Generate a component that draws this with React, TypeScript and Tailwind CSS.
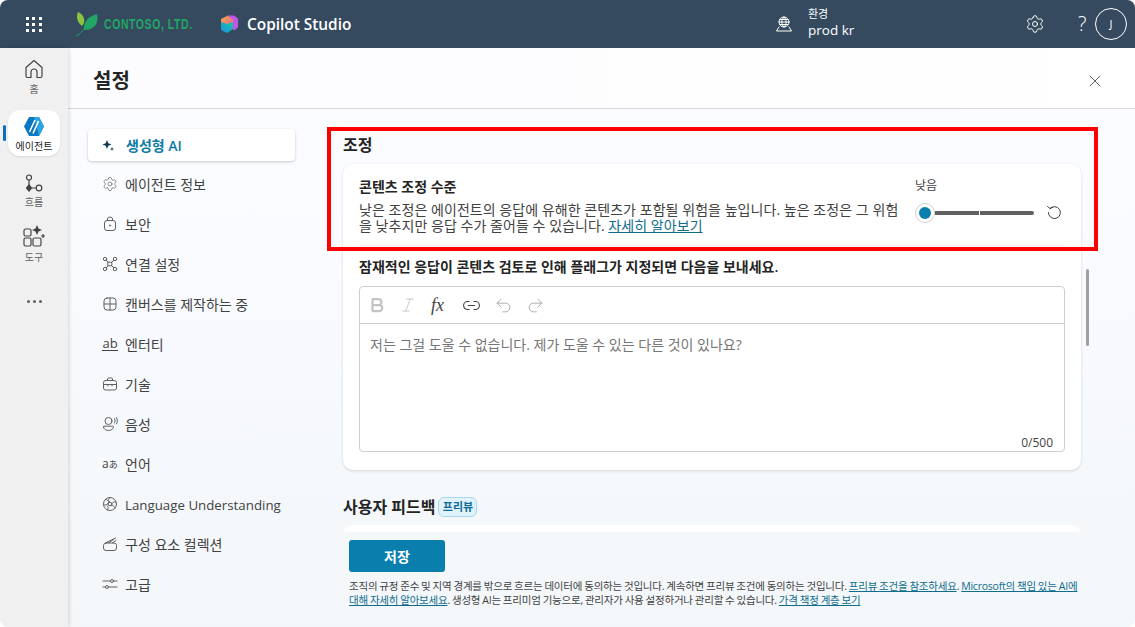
import { Bold, Italic, Link2, Redo2, Settings, Undo2, X } from 'lucide-react';
import type { ReactNode } from 'react';

const stroke = {
  fill: 'none',
  stroke: 'currentColor',
  strokeWidth: 1,
  strokeLinecap: 'round' as const,
  strokeLinejoin: 'round' as const,
};

function Icon({ children, size = 16 }: { children: ReactNode; size?: number }) {
  return (
    <svg width={size} height={size} viewBox="0 0 16 16" {...stroke}>
      {children}
    </svg>
  );
}

const navItems: { label: string; icon: ReactNode }[] = [
  {
    label: '에이전트 정보',
    icon: <Settings size={16} strokeWidth={1} />,
  },
  {
    label: '보안',
    icon: (
      <Icon>
        <rect x="2.5" y="4.5" width="11" height="10" rx="2.5" />
        <path d="M5.5 4.5V3a2.5 2 0 0 1 5 0v1.5" />
        <circle cx="8" cy="9.5" r=".6" fill="currentColor" />
      </Icon>
    ),
  },
  {
    label: '연결 설정',
    icon: (
      <Icon>
        <circle cx="3" cy="3" r="1.7" />
        <circle cx="13" cy="3" r="1.7" />
        <circle cx="3" cy="13" r="1.7" />
        <circle cx="13" cy="13" r="1.7" />
        <rect x="6.2" y="6.2" width="3.6" height="3.6" />
        <path d="M4.2 4.2l2 2M11.8 4.2l-2 2M4.2 11.8l2-2M11.8 11.8l-2-2" />
      </Icon>
    ),
  },
  {
    label: '캔버스를 제작하는 중',
    icon: (
      <Icon>
        <rect x="2" y="2" width="12" height="12" rx="3" />
        <path d="M8 2v12M2 8h12" />
      </Icon>
    ),
  },
  {
    label: '엔터티',
    icon: (
      <span className="flex w-[16px] flex-col items-center text-[13px] leading-[12px] text-[#424242]">
        ab
        <span className="mt-[1px] h-px w-[16px] bg-[#424242]" />
      </span>
    ),
  },
  {
    label: '기술',
    icon: (
      <Icon>
        <rect x="1.5" y="4.5" width="13" height="9.500" rx="2" />
        <path d="M5.500 4.500V3a1 1 0 0 1 1-1h3a1 1 0 0 1 1 1v1.500M1.500 8.500h13M6 8.500v1.500M10 8.500v1.500" />
      </Icon>
    ),
  },
  {
    label: '음성',
    icon: (
      <Icon>
        <circle cx="6.500" cy="5" r="3.500" />
        <path d="M1.500 11c0-.5.500-.8 1-.8h8c.5 0 1 .3 1 .8 0 2-2.500 3.500-5 3.500s-5-1.500-5-3.500zM12.500 2.500c.8 1.200.8 3.500 0 4.500M14.500 1.500c1.200 1.800 1.200 5 0 6.500" />
      </Icon>
    ),
  },
  {
    label: '언어',
    icon: (
      <span className="flex w-[16px] items-baseline text-[12px] leading-none text-[#424242]">
        a<span className="text-[9px]">あ</span>
      </span>
    ),
  },
  {
    label: 'Language Understanding',
    icon: (
      <Icon>
        <circle cx="8" cy="8" r="6.500" />
        <circle cx="8" cy="8" r="1.800" />
        <path d="M8 1.500c-2 2-2 3.500 0 4.700M14 6c-2.500-.5-4 .5-4.300 2.500M13 12c-1-2.500-2.500-3-4-2.300M5.500 14c1-2 1-3.500-.5-4.500M1.800 9c2.500.2 4-.5 4.500-2M3.500 3.500c1.800 0 3 1 3.500 3" />
      </Icon>
    ),
  },
  {
    label: '구성 요소 컬렉션',
    icon: (
      <Icon>
        <rect x="1.500" y="7" width="13" height="7.500" rx="2.500" />
        <path d="M3.500 7l8-4M6.500 7l7-5M10.500 7l3.500-2.500" />
      </Icon>
    ),
  },
  {
    label: '고급',
    icon: (
      <Icon>
        <path d="M1 5h7.500M11.500 5H15M1 11h2.500M6.500 11H15" />
        <circle cx="10" cy="5" r="1.500" />
        <circle cx="5" cy="11" r="1.500" />
      </Icon>
    ),
  },
];

function WaffleIcon() {
  return (
    <div className="grid w-[16px] grid-cols-3 gap-[3px]">
      {[0, 1, 2, 3, 4, 5, 6, 7, 8].map((i) => (
        <span key={i} className="h-[3px] w-[3px] bg-white" />
      ))}
    </div>
  );
}

function TopBar() {
  return (
    <header className="flex h-[48px] shrink-0 items-center bg-[#354a5f] text-white">
      <div className="ml-[26px] mr-[34px]">
        <WaffleIcon />
      </div>
      <svg width="24" height="26" viewBox="0 0 24 26">
        <path d="M6 15C1 11 0 6 2 1c4 2 7 5 6 11z" fill="#8cc63f" />
        <path d="M8 19c-1-7 3-13 13-16 2 9-2 16-13 16z" fill="#22a565" />
        <path d="M0 25c4-2 8-6 12-13" fill="none" stroke="#22a565" strokeWidth="1" />
      </svg>
      <span className="ml-[4px] w-[90px] origin-left scale-x-[0.68] whitespace-nowrap font-['Liberation_Sans'] text-[15.500px] font-bold tracking-[0.8px] text-[#22a565]">
        CONTOSO, LTD.
      </span>
      <svg className="ml-[26px]" width="18" height="18" viewBox="0 0 18 18">
        <defs>
          <linearGradient id="cubeA" x1="0" y1="0" x2="1" y2="1">
            <stop offset="0" stopColor="#f0b040" />
            <stop offset="1" stopColor="#ea5ba0" />
          </linearGradient>
          <linearGradient id="cubeB" x1="0" y1="1" x2="1" y2="0">
            <stop offset="0" stopColor="#1f8ee8" />
            <stop offset="1" stopColor="#17c9a0" />
          </linearGradient>
        </defs>
        <path d="M7 0.500l7 0 4 3v9l-4 3-4-5z" fill="#c055e6" />
        <path d="M1 4l6-3 6 3v5l-6 3-6-2z" fill="url(#cubeA)" />
        <path d="M1 7l6 2 6-2v7l-6 4-6-3z" fill="url(#cubeB)" />
      </svg>
      <span className="ml-[9px] w-[104px] whitespace-nowrap pt-[1px] text-[15.400px] font-semibold">Copilot Studio</span>

      <svg className="ml-[425px]" width="16" height="16" viewBox="0 0 16 16" {...stroke}>
        <circle cx="8" cy="6" r="5" />
        <path d="M3 6h10M4 3.500h8M4 8.500h8M8 1c-3 3-3 7 0 10M8 1c3 3 3 7 0 10M3 11L.5 15h15L13 11" />
      </svg>
      <div className="ml-[16px] flex w-[46px] -translate-y-[1px] flex-col">
        <span className="text-[11px] leading-[14px]">환경</span>
        <span className="whitespace-nowrap text-[13.500px] leading-[18px]">prod kr</span>
      </div>
      <Settings className="ml-[171px]" size={20} strokeWidth={1.200} />
      <span className="ml-[33px] w-[10px] text-[20px] font-light leading-none">?</span>
      <div className="ml-[7px] flex h-[32px] w-[32px] items-center justify-center rounded-full border border-white text-[11px]">
        J
      </div>
    </header>
  );
}

function Rail() {
  return (
    <aside className="z-10 flex w-[68px] shrink-0 flex-col items-center bg-[#f0f0f0] text-[#616161] shadow-[1px_0_4px_rgba(0,0,0,0.15)]">
      <svg className="mt-[11px]" width="20" height="20" viewBox="0 0 20 20" fill="none" stroke="#424242" strokeWidth="1.200">
        <path d="M2 8.500L10 1.500l8 7V17a1.500 1.500 0 0 1-1.500 1.500H13V13a3 3 0 0 0-6 0v5.500H3.500A1.500 1.500 0 0 1 2 17z" strokeLinejoin="round" />
      </svg>
      <span className="mt-[3px] text-[10px] leading-[14px]">홈</span>
      <div className="relative mt-[14px] w-full">
        <span className="absolute left-[3px] top-[15px] h-[16px] w-[3px] rounded-full bg-[#0f6cbd]" />
        <div className="mx-auto flex h-[46px] w-[52px] flex-col items-center rounded-[12px] bg-white pt-[7px] shadow-[0_1px_2px_rgba(0,0,0,0.1)]">
          <svg width="20" height="19" viewBox="0 0 20 19">
            <path d="M5 0h10l5 9.500-5 9.500H5L0 9.500z" fill="#0a78c2" />
            <path d="M10 0h5l5 9.500-5 9.500z" fill="#2ea4e0" />
            <path d="M5.500 15L11 3M9 16.500L14.500 4" stroke="#fff" strokeWidth="1.600" />
          </svg>
          <span className="mt-[4px] text-[10px] leading-[12px] text-[#242424]">에이전트</span>
        </div>
      </div>
      <svg className="mt-[18px]" width="20" height="20" viewBox="0 0 20 20" fill="none" stroke="#424242" strokeWidth="1.200">
        <circle cx="5" cy="3.500" r="2.500" />
        <path d="M5 6v8M7.500 14H12" />
        <path d="M5 11l2.500 3L5 17l-2.500-3z" fill="#424242" />
        <circle cx="15" cy="14" r="2.800" />
      </svg>
      <span className="mt-[1px] text-[10px] leading-[14px]">흐름</span>
      <svg className="mt-[16px]" width="22" height="22" viewBox="0 0 22 22" fill="none" stroke="#424242" strokeWidth="1.200">
        <rect x="1" y="4" width="7" height="7" rx="1.500" />
        <rect x="1" y="13" width="7" height="8" rx="1.500" />
        <rect x="10" y="13" width="8" height="8" rx="1.500" />
        <path d="M14 0l1.500 3.500L19 5l-3.500 1.500L14 10l-1.500-3.500L9 5l3.500-1.500z" fill="#424242" stroke="none" />
        <path d="M20 9v4M18 11h4" />
      </svg>
      <span className="mt-[3px] text-[10px] leading-[14px]">도구</span>
      <div className="mt-[36px] flex gap-[3px]">
        <span className="h-[3px] w-[3px] rounded-full bg-[#616161]" />
        <span className="h-[3px] w-[3px] rounded-full bg-[#616161]" />
        <span className="h-[3px] w-[3px] rounded-full bg-[#616161]" />
      </div>
    </aside>
  );
}

function SideNav() {
  return (
    <nav className="w-[256px] shrink-0 pl-[20px] pt-[20px]">
      <div className="flex h-[32px] w-[207px] items-center gap-[12px] rounded-[4px] bg-white pl-[14px] text-[14px] font-semibold text-[#0f7ba6] shadow-[0_1px_3px_rgba(0,0,0,0.2)]">
        <svg width="12" height="12" viewBox="0 0 12 12" fill="#0d3b52">
          <path d="M5 1l1.300 3.200L9.500 5.500 6.300 6.800 5 10 3.700 6.800.5 5.500l3.200-1.300zM10 8l.6 1.400 1.400.6-1.400.6L10 12l-.6-1.400L8 10l1.400-.6z" />
        </svg>
        생성형 AI
      </div>
      <ul className="mt-[3px] flex flex-col">
        {navItems.map((item) => (
          <li key={item.label} className="flex h-[40px] items-center gap-[7px] pl-[14px] text-[14px] text-[#424242]">
            <span className="flex w-[16px] justify-center text-[#616161]">{item.icon}</span>
            <span className={item.label === 'Language Understanding' ? 'pt-[4px] text-[13.300px]' : ''}>{item.label}</span>
          </li>
        ))}
      </ul>
    </nav>
  );
}

function ResetIcon() {
  return (
    <svg className="ml-[12px]" width="16" height="16" viewBox="0 0 16 16" {...stroke} stroke="#424242">
      <path d="M4 3.500a6 6 0 1 1-1.600 4M1.500 1.500L4 3.500 6.500 2.500" />
    </svg>
  );
}

function Slider() {
  return (
    <div className="flex w-[150px] shrink-0 flex-col">
      <span className="text-[12px] leading-[16px] text-[#424242]">낮음</span>
      <div className="mt-[9px] flex items-center">
        <span className="z-10 flex h-[20px] w-[20px] items-center justify-center rounded-full border border-[#d1d1d1] bg-white">
          <span className="h-[12px] w-[12px] rounded-full bg-[#0a7fae]" />
        </span>
        <span className="h-[4px] w-[44px] bg-[#616161]" />
        <span className="ml-[1px] h-[4px] w-[54px] rounded-r-full bg-[#616161]" />
        <ResetIcon />
      </div>
    </div>
  );
}

function Editor() {
  return (
    <div className="mx-[16px] mt-[10px] flex h-[166px] flex-col rounded-[4px] border border-[#cfcfcf]">
      <div className="flex h-[37px] shrink-0 items-center gap-[13px] border-b border-[#cfcfcf] pl-[8px]">
        <Bold size={18} strokeWidth={3} className="text-[#c4c4c4]" />
        <Italic size={18} strokeWidth={1.200} className="text-[#c4c4c4]" />
        <span className="ml-[1px] w-[18px] font-['Liberation_Serif',serif] text-[18px] italic leading-none text-[#424242]">fx</span>
        <Link2 size={19} strokeWidth={1.400} className="text-[#424242]" />
        <Undo2 size={19} strokeWidth={1} className="text-[#9a9a9a]" />
        <Redo2 size={19} strokeWidth={1} className="text-[#9a9a9a]" />
      </div>
      <div className="flex flex-1 flex-col px-[10px] pt-[11px]">
        <p className="text-[14px] leading-[20px] text-[#757575]">저는 그걸 도울 수 없습니다. 제가 도울 수 있는 다른 것이 있나요?</p>
        <span className="mt-auto pr-[1px] text-right text-[12px] leading-[17px] text-[#424242]">0/500</span>
      </div>
    </div>
  );
}

function Content() {
  return (
    <div className="relative flex min-w-0 flex-1 flex-col">
      <div className="min-h-0 flex-1 overflow-hidden pl-[19px] pr-[54px] pt-[25px]">
        <h2 className="text-[16px] font-semibold leading-[22px] text-[#242424]">조정</h2>
        <section className="mt-[8px] h-[306px] rounded-[10px] bg-white shadow-[0_1px_3px_rgba(0,0,0,0.15)]">
          <div className="mx-[16px] flex items-start justify-between border-b border-[#f0f0f0] pb-[11px] pt-[14px]">
            <div className="w-[540px] shrink-0">
              <h3 className="text-[14px] font-semibold leading-[18px] text-[#242424]">콘텐츠 조정 수준</h3>
              <p className="mt-[6px] break-all text-[14px] leading-[16px] tracking-[0.05px] text-[#424242]">
                낮은 조정은 에이전트의 응답에 유해한 콘텐츠가 포함될 위험을 높입니다. 높은 조정은 그 위험을 낮추지만 응답 수가 줄어들 수 있습니다.{' '}
                <a className="text-[#0f6c8c] underline">자세히 알아보기</a>
              </p>
            </div>
            <Slider />
          </div>
          <p className="mx-[16px] mt-[12px] text-[14px] font-semibold leading-[18px] text-[#242424]">
            잠재적인 응답이 콘텐츠 검토로 인해 플래그가 지정되면 다음을 보내세요.
          </p>
          <Editor />
        </section>
        <div className="mt-[26px] flex items-center gap-[3px]">
          <h2 className="text-[16px] font-semibold leading-[22px] text-[#242424]">사용자 피드백</h2>
          <span className="flex h-[20px] w-[39px] items-center justify-center rounded-[6px] border border-[#a8d8ee] bg-[#e0f3fb] text-[11px] font-semibold text-[#0f6c94]">
            프리뷰
          </span>
        </div>
        <div className="mt-[7px] h-[40px] rounded-t-[10px] bg-white" />
      </div>
      <footer className="h-[95px] shrink-0 pl-[25px] pt-[8px]">
        <button className="h-[32px] w-[96px] rounded-[3px] bg-[#0a7fae] text-[14px] font-semibold text-white">저장</button>
        <p className="mt-[7px] w-[733px] text-[10.500px] leading-[14px] tracking-[-0.22px] text-[#424242] [word-spacing:-0.5px]">
          조직의 규정 준수 및 지역 경계를 밖으로 흐르는 데이터에 동의하는 것입니다. 계속하면 프리뷰 조건에 동의하는 것입니다.{' '}
          <a className="text-[#0f6c8c] underline">프리뷰 조건을 참조하세요</a>.{' '}
          <a className="text-[#0f6c8c] underline">Microsoft의 책임 있는 AI에 대해 자세히 알아보세요</a>. 생성형 AI는 프리미엄 기능으로, 관리자가 사용 설정하거나 관리할 수 있습니다.{' '}
          <a className="text-[#0f6c8c] underline">가격 책정 계층 보기</a>
        </p>
      </footer>
      {/* highlight drawn over the section, plus the scroll thumb */}
      <div className="pointer-events-none absolute left-[3px] top-[18px] h-[124px] w-[771px] border-[4px] border-[#ff0000]" />
      <div className="absolute left-[762px] top-[160px] h-[77px] w-[3px] rounded-full bg-[#a0a0a0]" />
    </div>
  );
}

export default function App() {
  return (
    <div className="flex h-[627px] w-[1135px] flex-col overflow-hidden rounded-[8px] bg-white font-['Open_Sans','Noto_Sans_CJK_KR',sans-serif]">
      <TopBar />
      <div className="flex min-h-0 flex-1">
        <Rail />
        <main className="flex min-w-0 flex-1 flex-col">
          <div className="flex h-[61px] shrink-0 items-center justify-between border-b border-[#d6d6d6] bg-gradient-to-r from-[#fcfcff] to-white pl-[25px] pr-[30px] pt-[5px]">
            <h1 className="text-[20px] font-semibold text-[#242424]">설정</h1>
            <X size={20} strokeWidth={1} className="text-[#424242]" />
          </div>
          <div className="flex min-h-0 flex-1 bg-gradient-to-b from-[#fbfcff] to-[#f3f7fa]">
            <SideNav />
            <Content />
          </div>
        </main>
      </div>
    </div>
  );
}
